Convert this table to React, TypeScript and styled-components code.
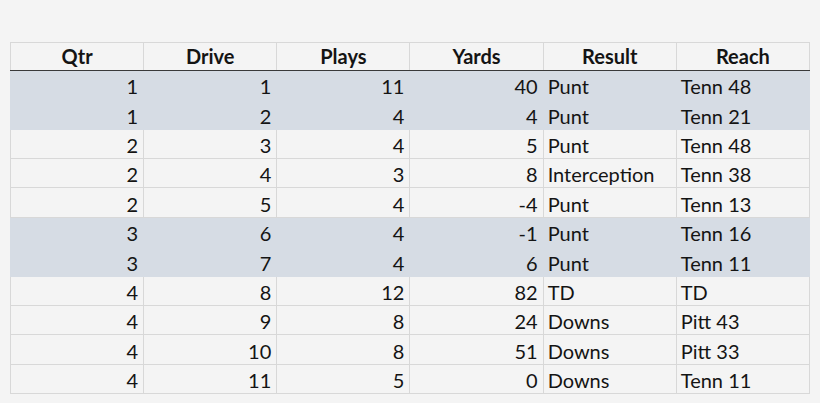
import React from "react";
import styled, { createGlobalStyle } from "styled-components";

const Global = createGlobalStyle`
  html, body { margin: 0; padding: 0; background: #f4f4f4; }
  body { font-family: "Lato", "Open Sans", sans-serif; color: #141414; }
`;

const Page = styled.div`
  width: 820px;
  height: 403px;
  padding: 42px 10px 0 10px;
  box-sizing: border-box;
`;

const Table = styled.table`
  width: 800px;
  border-collapse: collapse;
  table-layout: fixed;
  border: 1px solid #d8d8d8;
`;

const HeadRow = styled.tr`
  height: 28px;
`;

const HeadCell = styled.th`
  box-sizing: border-box;
  padding: 0 4px 3px;
  font-weight: 700;
  font-size: 20px;
  text-align: center;
  vertical-align: bottom;
  border-left: 1px solid #d8d8d8;
  border-right: 1px solid #d8d8d8;
  border-bottom: 1.5px solid #3a3a3a;
  line-height: 22px;
`;

const Row = styled.tr<{ $shade: boolean }>`
  height: 29.36px;
  background: ${(p) => (p.$shade ? "#d6dce4" : "#f4f4f4")};
  td {
    border-color: ${(p) => (p.$shade ? "#d6dce4" : "#d8d8d8")};
  }
`;

const Cell = styled.td<{ $align: "left" | "right" }>`
  box-sizing: border-box;
  padding: 0 5px 2px 4px;
  font-size: 20px;
  line-height: 22px;
  text-align: ${(p) => p.$align};
  vertical-align: bottom;
  border: 1px solid #d8d8d8;
  white-space: nowrap;
  overflow: hidden;
`;

const rows: [number, number, number, number, string, string][] = [
  [1, 1, 11, 40, "Punt", "Tenn 48"],
  [1, 2, 4, 4, "Punt", "Tenn 21"],
  [2, 3, 4, 5, "Punt", "Tenn 48"],
  [2, 4, 3, 8, "Interception", "Tenn 38"],
  [2, 5, 4, -4, "Punt", "Tenn 13"],
  [3, 6, 4, -1, "Punt", "Tenn 16"],
  [3, 7, 4, 6, "Punt", "Tenn 11"],
  [4, 8, 12, 82, "TD", "TD"],
  [4, 9, 8, 24, "Downs", "Pitt 43"],
  [4, 10, 8, 51, "Downs", "Pitt 33"],
  [4, 11, 5, 0, "Downs", "Tenn 11"],
];

const headers = ["Qtr", "Drive", "Plays", "Yards", "Result", "Reach"];

export default function App() {
  return (
    <Page>
      <Global />
      <Table>
        <thead>
          <HeadRow>
            {headers.map((h) => (
              <HeadCell key={h}>{h}</HeadCell>
            ))}
          </HeadRow>
        </thead>
        <tbody>
          {rows.map((r, i) => (
            <Row key={i} $shade={r[0] === 1 || r[0] === 3}>
              <Cell $align="right">{r[0]}</Cell>
              <Cell $align="right">{r[1]}</Cell>
              <Cell $align="right">{r[2]}</Cell>
              <Cell $align="right">{r[3]}</Cell>
              <Cell $align="left">{r[4]}</Cell>
              <Cell $align="left">{r[5]}</Cell>
            </Row>
          ))}
        </tbody>
      </Table>
    </Page>
  );
}
